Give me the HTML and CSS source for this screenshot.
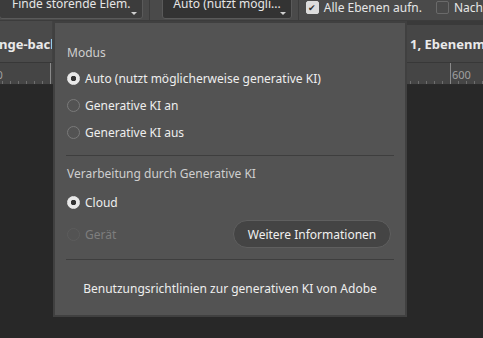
FILE: index.html
```html
<!DOCTYPE html>
<html lang="de">
<head>
    <meta charset="UTF-8">
    <title>Generative KI Modus</title>
    <link rel="stylesheet" href="styles.css">
</head>
<body>
    <div class="options-bar">
        <button class="drop drop-find">Finde störende Elem.<span class="caret"></span></button>
        <span class="sep"></span>
        <button class="drop drop-mode">Auto (nutzt mögli...<span class="caret"></span></button>
        <span class="sep"></span>
        <label class="check"><span class="box checked">&#10004;</span>Alle Ebenen aufn.</label>
        <label class="check"><span class="box"></span>Nach</label>
    </div>

    <div class="tabs">
        <div class="tab">nge-background</div>
        <div class="tab tab-right">1, Ebenenmaske</div>
    </div>

    <div class="ruler">
        <span class="ruler-label label-left">500</span>
        <span class="ruler-label label-right">600</span>
    </div>

    <div class="canvas"></div>

    <div class="popup">
        <div class="section">
            <div class="heading">Modus</div>
            <label class="radio"><span class="dot on"></span>Auto (nutzt möglicherweise generative KI)</label>
            <label class="radio"><span class="dot"></span>Generative KI an</label>
            <label class="radio"><span class="dot"></span>Generative KI aus</label>
        </div>
        <div class="section">
            <div class="heading">Verarbeitung durch Generative KI</div>
            <label class="radio"><span class="dot on"></span>Cloud</label>
            <div class="row">
                <label class="radio disabled"><span class="dot"></span>Gerät</label>
                <button class="more">Weitere Informationen</button>
            </div>
        </div>
        <div class="footer-link">Benutzungsrichtlinien zur generativen KI von Adobe</div>
    </div>
</body>
</html>
```

FILE: styles.css
```css
body {
    margin: 0;
    width: 483px;
    height: 338px;
    overflow: hidden;
    background-color: #282828;
    font-family: "Noto Sans", "Open Sans", sans-serif;
    font-size: 12px;
    color: #e6e6e6;
    position: relative;
}

.options-bar {
    height: 20px;
    background-color: #4a4a4a;
    display: flex;
    align-items: flex-end;
    border-bottom: 1px solid #3c3c3c;
    overflow: hidden;
    white-space: nowrap;
}

.drop {
    position: relative;
    height: 28px;
    margin-bottom: 1px;
    border: 1px solid #5a5a5a;
    border-radius: 3px;
    background-color: #3c3c3c;
    color: #e6e6e6;
    font-family: inherit;
    font-size: 12px;
    padding: 0 0 6px;
    display: flex;
    align-items: flex-end;
    justify-content: center;
}

.drop-find {
    width: 146px;
    margin-left: -1px;
}

.drop-mode {
    width: 131px;
    margin-left: 12px;
    background-color: #333;
}

.caret {
    position: absolute;
    right: 5px;
    bottom: 3px;
    border-left: 3px solid transparent;
    border-right: 3px solid transparent;
    border-top: 3px solid #d0d0d0;
}

.sep {
    width: 1px;
    height: 22px;
    margin-left: 6px;
    background-color: #3c3c3c;
    align-self: flex-start;
}

.check {
    display: flex;
    align-items: center;
    margin-left: 7px;
    margin-bottom: 6px;
    height: 14px;
    color: #e6e6e6;
    white-space: nowrap;
}

.check + .check {
    margin-left: 14px;
}

.box {
    width: 11px;
    height: 11px;
    border: 1px solid #6a6a6a;
    border-radius: 2px;
    margin-right: 5px;
    font-size: 9px;
    line-height: 11px;
    text-align: center;
    color: #333;
}

.box.checked {
    background-color: #dcdcdc;
    border-color: #dcdcdc;
}

.tabs {
    height: 41px;
    display: flex;
    justify-content: space-between;
    background-color: #424242;
    border-bottom: 1px solid #383838;
    font-weight: bold;
    font-size: 13px;
    color: #eaeaea;
}

.tab {
    width: 52px;
    padding-top: 14px;
    overflow: hidden;
    white-space: nowrap;
    text-indent: -1px;
    background-color: #4a4a4a;
}

.tab-right {
    width: 73px;
    padding-left: 4px;
    text-indent: 0;
    background-color: #464646;
    border-top: 4px solid #3a3a3a;
    padding-top: 10px;
}

.ruler {
    height: 21px;
    position: relative;
    background-color: #454545;
    background-image:
        linear-gradient(to right, #8a8a8a 1px, transparent 1px),
        linear-gradient(to right, #6e6e6e 1px, transparent 1px);
    background-size: 400px 21px, 8px 3px;
    background-position: 50px 0, 2px bottom;
    background-repeat: repeat-x;
    border-bottom: 1px solid #2a2a2a;
}

.ruler-label {
    position: absolute;
    top: 4px;
    font-size: 11px;
    color: #a0a0a0;
}

.label-left {
    left: -16px;
}

.label-right {
    left: 452px;
}

.canvas {
    height: 254px;
    background-color: #282828;
}

.popup {
    position: absolute;
    left: 53px;
    top: 21px;
    width: 354px;
    height: 296px;
    box-sizing: border-box;
    padding: 0 11px;
    background-color: #535353;
    border: 2px solid #404040;
}

.section {
    padding: 20px 0 9px 1px;
    border-bottom: 1px solid #3e3e3e;
}

.section + .section {
    padding-top: 8px;
    padding-bottom: 11px;
}

.heading {
    color: #cfcfcf;
    height: 19px;
    line-height: 19px;
    margin-bottom: 3px;
}

.section + .section .heading {
    margin-bottom: 6px;
}

.radio {
    display: flex;
    align-items: center;
    height: 27px;
    color: #eeeeee;
}

.dot {
    width: 11px;
    height: 11px;
    border: 1px solid #7a7a7a;
    border-radius: 50%;
    margin-right: 5px;
    box-sizing: content-box;
}

.dot.on {
    border-color: #e8e8e8;
    background: radial-gradient(circle, #333 2.5px, #e8e8e8 3px);
}

.radio.disabled {
    color: #7e7e7e;
}

.radio.disabled .dot {
    border-color: #5c5c5c;
}

.row {
    display: flex;
    justify-content: space-between;
    align-items: center;
    margin-top: 4px;
}

.more {
    height: 28px;
    width: 158px;
    margin-right: 3px;
    border: 1px solid #5f5f5f;
    border-radius: 15px;
    background-color: #444;
    color: #f0f0f0;
    font-family: inherit;
    font-size: 12px;
}

.footer-link {
    text-align: center;
    padding-top: 20px;
    color: #eeeeee;
}
```
